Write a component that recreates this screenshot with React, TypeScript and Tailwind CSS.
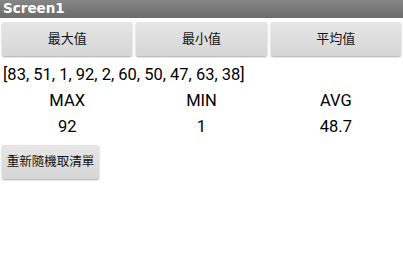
const cjk = { fontFamily: 'Roboto, "Noto Sans CJK TC", sans-serif' };

function AppButton({ label, className = "" }: { label: string; className?: string }) {
  return (
    <button
      className={`h-[34px] whitespace-nowrap rounded-[2px] bg-gradient-to-b from-[#e6e6e6] to-[#d6d6d6] text-[#111] shadow-[0_1px_2px_rgba(0,0,0,0.35)] ${className}`}
      style={cjk}
    >
      {label}
    </button>
  );
}

export default function App() {
  const cols = [
    { head: "MAX", value: "92" },
    { head: "MIN", value: "1" },
    { head: "AVG", value: "48.7" },
  ];

  return (
    <div className="w-[403px] h-[274px] bg-white overflow-hidden" style={{ fontFamily: "Roboto, sans-serif" }}>
      <div className="h-[18px] bg-gradient-to-b from-[#868686] to-[#6c6c6c] flex items-center px-[3px]">
        <span className="text-[13.5px] font-bold text-white leading-none" style={{ fontFamily: '"DejaVu Sans", sans-serif' }}>
          Screen1
        </span>
      </div>

      <div className="grid grid-cols-3 mt-[4px]">
        <AppButton label="最大值" className="mx-[2px] text-[13px]" />
        <AppButton label="最小值" className="mx-[2px] text-[13px]" />
        <AppButton label="平均值" className="mx-[2px] text-[13px]" />
      </div>

      <div className="mt-[8px] px-[3px] text-[16.5px] leading-[22px] text-black">
        [83, 51, 1, 92, 2, 60, 50, 47, 63, 38]
      </div>

      <div className="mt-[2px] grid grid-cols-3 text-[16.5px] leading-[26px] text-black text-center">
        {cols.map((c) => (
          <div key={c.head}>{c.head}</div>
        ))}
        {cols.map((c) => (
          <div key={c.head}>{c.value}</div>
        ))}
      </div>

      <div className="mt-[5px] px-[2px]">
        <AppButton label="重新隨機取清單" className="w-[97px] h-[32px] text-[12.5px]" />
      </div>
    </div>
  );
}
